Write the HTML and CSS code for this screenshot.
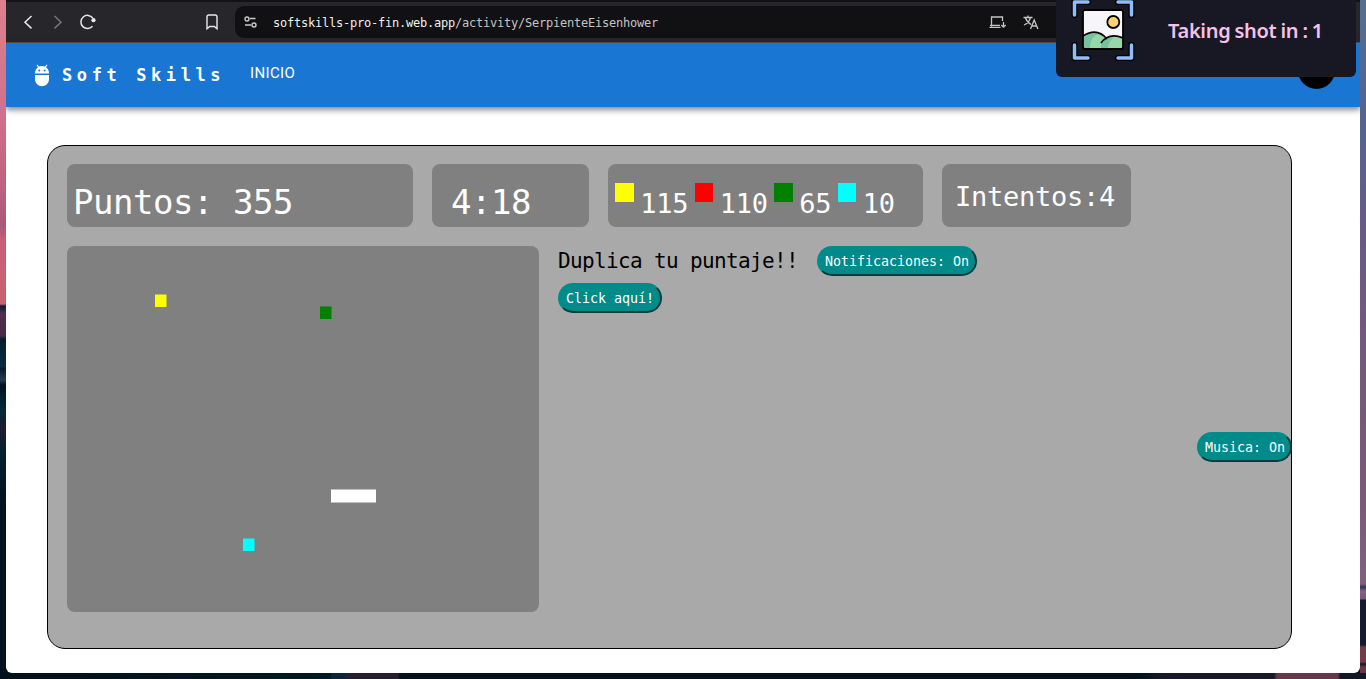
FILE: index.html
```html
<!DOCTYPE html>
<html lang="es">
<head>
<meta charset="utf-8">
<title>Soft Skills</title>
<link rel="stylesheet" href="styles.css">
</head>
<body>
<div class="edge edge-left"></div>
<div class="window">
  <div class="browser">
    <svg class="nav-icons" width="229" height="36" viewBox="6 4 229 36" fill="none" stroke="#e8e8e8" stroke-width="1.5">
      <path d="M31.5 16 25 22.2l6.500 6.200"/>
      <path d="M54.500 16l6.500 6.200-6.500 6.200" stroke="#77777a"/>
      <path d="M92.500 26.300A6.600 6.600 0 1 1 92.800 18"/>
      <circle cx="93.500" cy="20.200" r="2.100" fill="#e8e8e8" stroke="none"/>
      <path d="M207 28.800V17q0-2 2-2h6q2 0 2 2v11.800l-2.700-2.300h-4.600z" stroke-width="1.400"/>
    </svg>
    <div class="address">
      <svg width="14" height="14" viewBox="0 0 14 14" fill="none" stroke="#c9c9ca" stroke-width="1.400"><circle cx="3" cy="4" r="2"/><path d="M6 3.500h5.500M1 10h6"/><circle cx="10" cy="10" r="2"/></svg>
      <span class="url">softskills-pro-fin.web.app<span class="path">/activity/SerpienteEisenhower</span></span>
      <svg class="tools" width="52" height="18" viewBox="0 0 52 18" fill="none" stroke="#c4c4c5" stroke-width="1.300"><path d="M14.500 8V4H3.500v9.500M1.500 14.300h11M2 12.300h10"/><path d="M15.500 9v5M13.300 12l2.200 2.200 2.200-2.200"/><path d="M35.500 4.500h9M40 2.500v2M42.500 4.500c-1 3.500-3 6-6.500 7.500M37.500 5c1 3 3 5 5.500 6.500M42.500 16l3.700-9 3.700 9M43.800 13h4.800"/></svg>
    </div>
  </div>
  <header class="appbar">
    <svg class="robot" width="16" height="23" viewBox="0 0 16 23" fill="#fff"><path d="M1 9.500h14V8A7 6 0 0 0 12 3.300L13.500 1.200 12.600.5 11 2.600A8 8 0 0 0 5 2.600L3.400.5l-.9.700L4 3.300A7 6 0 0 0 1 8zM1 11h14v4.500a7 6.700 0 0 1-14 0z"/><circle cx="5.300" cy="6.500" r="1" fill="#1976d2"/><circle cx="10.700" cy="6.500" r="1" fill="#1976d2"/></svg>
    <span class="brand">Soft Skills</span>
    <span class="home">INICIO</span>
    <span class="avatar"></span>
  </header>
  <main class="content">
    <section class="panel">
      <div class="stats">
        <div class="card points">Puntos: 355</div>
        <div class="card time">4:18</div>
        <div class="card colors">
          <i class="chip yellow"></i><span>115</span>
          <i class="chip red"></i><span>110</span>
          <i class="chip green"></i><span>65</span>
          <i class="chip cyan"></i><span>10</span>
        </div>
        <div class="card tries">Intentos:4</div>
      </div>
      <div class="game">
        <svg class="board" width="472" height="366">
          <rect x="88" y="48.500" width="11.500" height="12.500" fill="#ff0"/>
          <rect x="253" y="60.500" width="11.500" height="12.500" fill="green"/>
          <rect x="264" y="243.500" width="45" height="13" fill="#fff"/>
          <rect x="176" y="292.500" width="11.500" height="12.500" fill="#0ff"/>
        </svg>
        <div class="bonus">
          <span class="offer">Duplica tu puntaje!!</span>
          <button class="pill">Click aquí!</button>
        </div>
        <button class="pill notify">Notificaciones: On</button>
        <button class="pill music">Musica: On</button>
      </div>
    </section>
  </main>
</div>
<div class="edge edge-right"></div>
<div class="edge-bottom"></div>
<aside class="toast">
  <svg width="64" height="64" viewBox="0 1 64 64">
    <g fill="none" stroke-linecap="round" stroke-linejoin="round">
      <path d="M3.500 16V3H17M47 3h13.500v13M3.500 46v13H17M47 59h13.500V46" stroke="#000" stroke-width="6"/>
      <path d="M3.500 16V3H17M47 3h13.500v13M3.500 46v13H17M47 59h13.500V46" stroke="#90bdfb" stroke-width="3.500"/>
    </g>
    <rect x="12" y="11" width="40" height="39" rx="2" fill="#f8f5fa"/>
    <path d="M12.800 37q11-8 22 2l1 10h-23z" fill="#77c0a0"/>
    <path d="M19 49c0-9 4-12 8-14q5 1 8 5 8-5 16.200-1v10z" fill="#97d6a5"/>
    <path d="M37 49q0-6 6-11l-8 2-5 5v4z" fill="#77c0a0"/>
    <path d="M12 37q14-9 24 3M30 44q8-11 22-5" fill="none" stroke="#000" stroke-width="1.800"/>
    <rect x="12" y="11" width="40" height="39" rx="2" fill="none" stroke="#000" stroke-width="1.800"/>
    <circle cx="42.300" cy="23" r="6" fill="#ffd16b" stroke="#000" stroke-width="1.800"/>
  </svg>
  <span>Taking shot in : 1</span>
</aside>
</body>
</html>
```
FILE: styles.css
```css
* { box-sizing: border-box; }
body {
  margin: 0; width: 1366px; height: 679px; overflow: hidden; position: relative;
  display: grid; grid-template: 673px 6px / 6px 1354px 6px;
  background: #02131f; font-family: "DejaVu Sans Mono", monospace;
}
.edge-left { background: linear-gradient(#dc8190 0, #d1718a 110px, #bd617f 190px, #a9577b 225px, #c86078 240px, #c7626f 304px, #14172f 306px, #253150 311px, #542d4b 313px, #472a44 336px, #081d2e 339px, #062b40 367px, #06172a 368px, #263c55 380px, #02131f 385px, #05283a 410px, #1f1b30 430px, #04202f 452px, #02131f 500px); }
.edge-right { background: linear-gradient(#527092 0, #536490 110px, #655a89 220px, #75587f 350px, #7b5875 480px, #80607c 584px, #303554 587px, #84627f 591px, #79597b 599px, #171a2c 600px, #171a2c 645px, #743c4b 647px, #743c4b 662px, #141728 664px, #6a3749 667px); }
.edge-bottom {
  grid-column: 1 / 4;
  background: linear-gradient(90deg, #01101c 0, #021825 330px, #0b2438 332px, #0b2438 346px, #251d30 348px, #251d30 398px, #02131f 400px, #02131f 1140px, #171829 1160px, #1a182b 1274px, #67364a 1277px, #67364a 1338px, #111827 1340px);
}
.window { background: #fff; border-radius: 0 0 6px 6px; overflow: hidden; display: flex; flex-direction: column; }
.browser { height: 43px; flex: none; background: #27272b; border-top: 2px solid #131315; border-bottom: 1px solid #55504f; display: flex; align-items: center; }
.nav-icons { flex: none; }
.address { flex: 1; margin-right: 8px; height: 32px; border-radius: 9px; background: #111113; display: flex; align-items: center; padding-left: 9px; }
.url { margin-left: 15px; padding-top: 1px; font-size: 12px; letter-spacing: -0.224px; color: #efefef; white-space: pre; }
.path { color: #c3c3c3; }
.tools { margin-left: 330px; }
.appbar { height: 64px; flex: none; background: #1976d2; display: flex; align-items: center; padding: 0 25px 0 28px; color: #fff; box-shadow: 0 2px 4px -1px #0003, 0 4px 5px #0024, 0 1px 10px #0000001f; z-index: 1; }
.brand { margin-left: 12px; width: 176px; font-size: 17px; font-weight: 700; letter-spacing: 4.6px; white-space: pre; }
.home { margin-left: 12px; padding-bottom: 4px; font: 15px Roboto, sans-serif; letter-spacing: 0.35px; }
.avatar { width: 37px; height: 37px; margin-left: auto; margin-bottom: 10px; border-radius: 50%; background: #000; }
.content { padding: 38px 68px 0 41px; }
.panel { height: 504px; border: 1px solid #000; border-radius: 18px; background: #a9a9a9; padding: 18px 0 0 19px; }
.stats { display: flex; gap: 19px; height: 63px; }
.card { background: #808080; border-radius: 8px; color: #fff; white-space: pre; line-height: 63px; }
.points { width: 346px; padding: 7px 0 0 6px; font-size: 34px; letter-spacing: -0.47px; }
.time { width: 157px; padding: 7px 0 0 19px; font-size: 34px; letter-spacing: -0.47px; }
.colors { width: 315px; padding-left: 7px; display: flex; white-space: normal; font-size: 27px; letter-spacing: -0.25px; }
.colors span { padding: 8px 6.300px 0 6.700px; }
.chip { width: 18.500px; height: 19px; margin-top: 19px; flex: none; }
.yellow { background: #ff0; }
.red { background: #f00; }
.green { background: #008000; }
.cyan { background: #0ff; }
.tries { width: 189px; padding-left: 13px; padding-top: 1px; font-size: 27px; letter-spacing: -0.25px; }
.game { display: flex; align-items: flex-start; margin-top: 19px; }
.board { flex: none; background: #808080; border-radius: 8px; }
.bonus { width: 278px; padding-left: 19px; display: flex; flex-direction: column; align-items: flex-start; gap: 7px; }
.offer { height: 30px; line-height: 31px; font-size: 21px; letter-spacing: -0.643px; white-space: pre; }
.pill { height: 30px; padding: 0 6px; flex: none; border: 2px solid #008b8b; border-right-color: #003c3c; border-bottom-color: #003c3c; border-radius: 15px; background: #008b8b; color: #fff; font: 13.300px "DejaVu Sans Mono", monospace; letter-spacing: -0.007px; white-space: pre; }
.music { margin: 186px -1px 0 auto; width: 95px; padding: 0 5px 0 6px; }
.toast { position: absolute; top: 0; left: 1056px; width: 300px; height: 77px; border-radius: 0 0 6px 6px; background: #181824; display: flex; align-items: flex-start; padding-left: 15px; z-index: 2; }
.toast span { margin: 17px 0 0 33px; font: 600 20px/28px "Noto Sans", sans-serif; letter-spacing: -0.3px; word-spacing: -0.8px; color: #f5c2e7; white-space: pre; }
```
